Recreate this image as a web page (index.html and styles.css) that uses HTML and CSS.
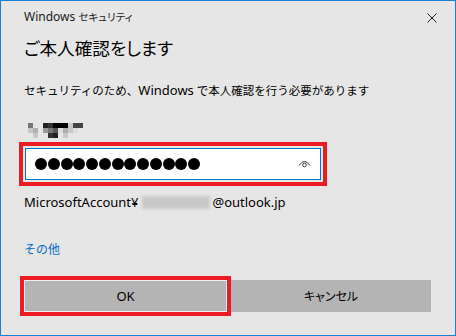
FILE: index.html
```html
<!DOCTYPE html>
<html lang="ja">
<head>
    <meta charset="UTF-8">
    <title>Windows セキュリティ</title>
    <link rel="stylesheet" href="styles.css">
</head>
<body>
    <div class="dialog">
        <div class="titlebar">
            <span class="app-name">Windows <span class="kana">セキュリティ</span></span>
            <svg class="close" width="10" height="10" viewBox="0 0 10 10">
                <path d="M0.5 0.5 L9.5 9.5 M9.5 0.5 L0.5 9.5" stroke="#1f1f1f" stroke-width="1" fill="none"/>
            </svg>
        </div>

        <h1>ご本人確認をします</h1>
        <p class="desc">セキュリティのため、<span class="latin">Windows</span> で本人確認を行う必要があります</p>

        <div class="mosaic">
            <i class="g5"></i><i></i><i></i><i class="g1"></i><i class="g2"></i><i class="g0"></i><i class="g0"></i><i class="g0"></i><i class="g8"></i><i class="g3"></i><i class="g3"></i>
            <i class="g8"></i><i class="g7"></i><i></i><i class="g6"></i><i class="g5"></i><i class="g4"></i><i class="g9"></i><i class="g7"></i><i class="g8"></i><i class="g9"></i><i></i>
            <i></i><i class="g8"></i><i></i><i></i><i class="g2"></i><i class="g1"></i><i></i><i class="g8"></i><i></i><i></i><i></i>
        </div>

        <div class="field marked">
            <div class="password">
                <span class="dots">
                    <i></i><i></i><i></i><i></i><i></i><i></i><i></i><i></i><i></i><i></i><i></i><i></i><i></i>
                </span>
                <svg class="reveal" width="13" height="9" viewBox="0 0 13 9">
                    <path d="M1 6.5 Q6.5 -1.5 12 6.5" stroke="#3a3a3a" stroke-width="1" fill="none"/>
                    <circle cx="6.5" cy="6" r="1.8" stroke="#3a3a3a" stroke-width="1" fill="none"/>
                </svg>
            </div>
        </div>

        <p class="account">MicrosoftAccount¥<span class="hidden-id"></span>@outlook.jp</p>

        <a class="more" href="#">その他</a>

        <div class="buttons">
            <button class="btn ok marked">OK</button>
            <button class="btn cancel">キャンセル</button>
        </div>
    </div>
</body>
</html>
```

FILE: styles.css
```css
html, body {
    margin: 0;
    padding: 0;
    background-color: #e6e6e6;
}
.dialog {
    width: 456px;
    height: 336px;
    box-sizing: border-box;
    border: 1px solid #1a7fd6;
    background-color: #e6e6e6;
    padding: 0 24px 0 23px;
    font-family: "Noto Sans", "Noto Sans CJK JP", sans-serif;
    color: #000;
}

.titlebar {
    display: flex;
    align-items: center;
    justify-content: space-between;
    padding-top: 8px;
    height: 16px;
}
.app-name { font-size: 12px; line-height: 16px; color: #1a1a1a; }
.app-name .kana { font-size: 10.5px; font-feature-settings: "palt"; }
.close { margin-right: -6px; margin-top: 1px; }

h1 {
    margin: 11px 0 0;
    font-size: 17.6px;
    line-height: 24px;
    font-weight: normal;
    font-feature-settings: "palt";
}
.desc {
    margin: 21px 0 0;
    font-size: 11.5px;
    line-height: 18px;
    white-space: nowrap;
}
.latin { font-size: 13px; }

.mosaic {
    display: grid;
    grid-template-columns: repeat(11, 5px);
    grid-auto-rows: 5px;
    margin: 23px 0 0 4px;
    width: 55px;
}
.mosaic i { display: block; }
.g0 { background-color: #000; }
.g1 { background-color: #222; }
.g2 { background-color: #333; }
.g3 { background-color: #444; }
.g4 { background-color: #555; }
.g5 { background-color: #777; }
.g6 { background-color: #999; }
.g7 { background-color: #b0b0b0; }
.g8 { background-color: #c8c8c8; }
.g9 { background-color: #dcdcdc; }

/* red annotation frames */
.marked { position: relative; }
.marked::after {
    content: "";
    position: absolute;
    top: -5px; left: -5px; right: -5px; bottom: -5px;
    border: 4px solid #ed1c24;
    pointer-events: none;
}

.field {
    margin-top: 9px;
    padding: 1px;
    width: 296px;
}
.password {
    display: flex;
    align-items: center;
    justify-content: space-between;
    height: 30px;
    border: 1px solid #0078d7;
    background-color: #fff;
    padding: 0 9px 0 9px;
}
.dots { display: flex; }
.dots i {
    display: block;
    width: 12px;
    height: 12px;
    margin-right: 0.75px;
    border-radius: 50%;
    background-color: #000;
}
.reveal { margin-top: -1px; }

.account {
    margin: 12px 0 0;
    font-size: 13px;
    line-height: 18px;
    display: flex;
    align-items: center;
}
.hidden-id {
    display: inline-block;
    width: 68px;
    height: 13px;
    margin: 0 2px 0 4px;
    background-color: #c9c9c9;
    filter: blur(1.5px);
}

.more {
    display: block;
    margin-top: 30px;
    font-size: 12px;
    line-height: 18px;
    color: #0a6cc4;
    text-decoration: none;
}

.buttons {
    display: flex;
    gap: 4px;
    margin-top: 21px;
}
.btn {
    height: 32px;
    border: 1px solid #b4b4b4;
    background-color: #b4b4b4;
    font-family: "Noto Sans", "Noto Sans CJK JP", sans-serif;
    font-feature-settings: "palt";
    font-size: 12px;
    color: #000;
    padding: 0;
}
.ok { width: 203px; border-color: #efefef; font-size: 13px; }
.cancel { flex: 1; }
```
